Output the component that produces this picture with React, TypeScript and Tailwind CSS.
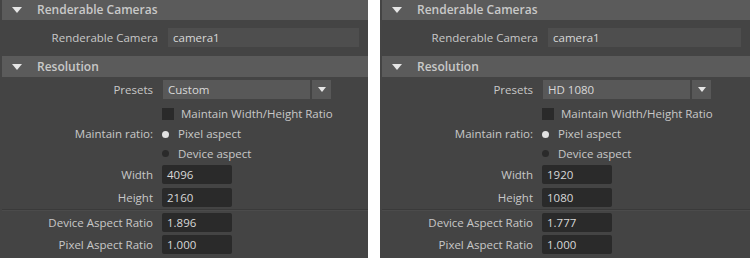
import React from "react";

const font = { fontFamily: '"Open Sans", "Noto Sans", sans-serif' };

function Tri({ className }: { className: string }) {
  return (
    <svg width="10" height="6" viewBox="0 0 10 6" className={className}>
      <polygon points="0,0 10,0 5,6" fill="#e6e6e6" />
    </svg>
  );
}

function Header({ title, h }: { title: string; h: string }) {
  return (
    <div className={`${h} ml-[2px] bg-[#5b5b5b] flex items-center`}>
      <Tri className="ml-[10px]" />
      <span className="ml-[15px] text-[12px] font-semibold text-[#c9c9c9] leading-none">{title}</span>
    </div>
  );
}

function Label({ children }: { children: React.ReactNode }) {
  return (
    <div className="w-[155px] shrink-0 pr-[2px] text-right text-[11.5px] text-[#c8c8c8] leading-none">
      {children}
    </div>
  );
}

function NumRow({ label, value, mt }: { label: string; value: string; mt: string }) {
  return (
    <div className={`${mt} h-[19px] flex items-center`}>
      <Label>{label}</Label>
      <div className="ml-[7px] w-[70px] h-[19px] rounded-[2px] bg-[#2a2a2a] flex items-center pl-[5px] text-[11.5px] text-[#d8d8d8]">
        {value}
      </div>
    </div>
  );
}

function Panel({ preset, w, h, dar }: { preset: string; w: string; h: string; dar: string }) {
  return (
    <div className="h-full bg-[#444444] flex flex-col" style={font}>
      <Header title="Renderable Cameras" h="h-[20px]" />
      <div className="h-[36px] flex items-start">
        <div className="mt-[8px] h-[19px] flex items-center w-full">
          <div className="w-[158px] shrink-0 text-right text-[11.5px] text-[#c8c8c8] leading-none">Renderable Camera</div>
          <div className="ml-[10px] flex-1 mr-[9px] h-[19px] bg-[#4e4e4e] flex items-center pl-[5px] text-[11.5px] text-[#d8d8d8]">
            camera1
          </div>
        </div>
      </div>
      <Header title="Resolution" h="h-[21px]" />
      <div className="mt-[3px] h-[19px] flex items-center">
        <Label>Presets</Label>
        <div className="ml-[8px] w-[147px] h-[19px] bg-[#585858] flex items-center pl-[5px] text-[11.5px] text-[#d8d8d8]">
          {preset}
        </div>
        <div className="ml-[2px] w-[19px] h-[19px] bg-[#585858] flex items-center justify-center">
          <svg width="8" height="5" viewBox="0 0 8 5">
            <polygon points="0,0 8,0 4,5" fill="#e6e6e6" />
          </svg>
        </div>
      </div>
      <div className="mt-[5px] h-[20px] flex items-center">
        <div className="w-[162px] shrink-0" />
        <div className="w-[12px] h-[12px] bg-[#2a2a2a]" />
        <span className="ml-[7px] text-[11.5px] text-[#c8c8c8] leading-none">Maintain Width/Height Ratio</span>
      </div>
      <div className="h-[20px] flex items-center">
        <Label>Maintain ratio:</Label>
        <div className="ml-[7px] w-[7px] h-[7px] rounded-full bg-[#e2e2e2]" />
        <span className="ml-[9px] text-[11.5px] text-[#c8c8c8] leading-none">Pixel aspect</span>
      </div>
      <div className="h-[19px] flex items-center">
        <div className="w-[162px] shrink-0" />
        <div className="w-[7px] h-[7px] rounded-full bg-[#2a2a2a]" />
        <span className="ml-[9px] text-[11.5px] text-[#c8c8c8] leading-none">Device aspect</span>
      </div>
      <NumRow label="Width" value={w} mt="mt-[2px]" />
      <NumRow label="Height" value={h} mt="mt-[4px]" />
      <div className="mt-[2px] ml-[2px] h-[2px] border-t border-[#3a3a3a] border-b-[#4b4b4b] border-b" />
      <NumRow label="Device Aspect Ratio" value={dar} mt="mt-[2px]" />
      <NumRow label="Pixel Aspect Ratio" value="1.000" mt="mt-[3px]" />
    </div>
  );
}

export default function App() {
  return (
    <div className="w-[750px] h-[258px] bg-white flex overflow-hidden">
      <div className="w-[368px] h-full">
        <Panel preset="Custom" w="4096" h="2160" dar="1.896" />
      </div>
      <div className="w-[12px]" />
      <div className="w-[370px] h-full">
        <Panel preset="HD 1080" w="1920" h="1080" dar="1.777" />
      </div>
    </div>
  );
}
